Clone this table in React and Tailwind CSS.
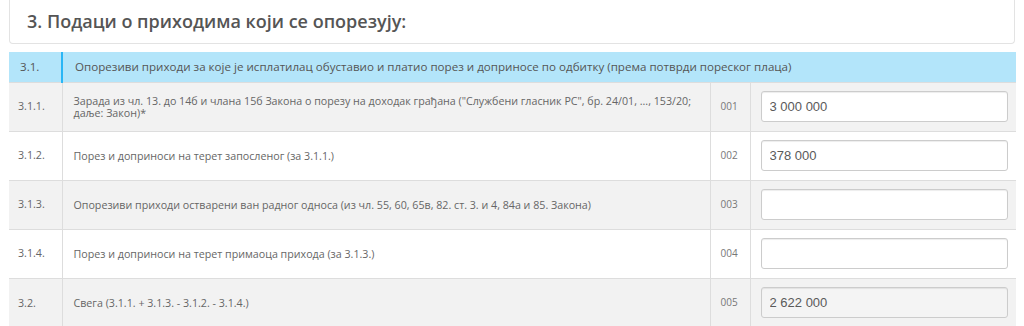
import React from "react";

const rows = [
  {
    no: "3.1.1.",
    label: (
      <>
        <span className="whitespace-nowrap">
          Зарада из чл. 13. до 14б и члана 15б Закона о порезу на доходак грађана ("Службени гласник РС", бр. 24/01, ..., 153/20;
        </span>
        <br />
        даље: Закон)*
      </>
    ),
    code: "001",
    value: "3 000 000",
  },
  { no: "3.1.2.", label: "Порез и доприноси на терет запосленог (за 3.1.1.)", code: "002", value: "378 000" },
  {
    no: "3.1.3.",
    label: "Опорезиви приходи остварени ван радног односа (из чл. 55, 60, 65в, 82. ст. 3. и 4, 84а и 85. Закона)",
    code: "003",
    value: "",
  },
  { no: "3.1.4.", label: "Порез и доприноси на терет примаоца прихода (за 3.1.3.)", code: "004", value: "" },
  { no: "3.2.", label: "Свега (3.1.1. + 3.1.3. - 3.1.2. - 3.1.4.)", code: "005", value: "2 622 000", readOnly: true },
];

const IncomeRow = ({ row, striped }) => (
  <tr className={`h-[49px] border-t border-[#dddddd] ${striped ? "bg-[#f2f2f2]" : "bg-white"}`}>
    <td className="pl-[9px] align-middle text-[10.7px] text-[#666]">{row.no}</td>
    <td className="border-l border-[#dddddd] pl-[11px] pr-2 align-middle text-[10.7px] leading-[12px] text-[#666]">
      {row.label}
    </td>
    <td className="border-l border-[#dddddd] pl-[10px] align-middle text-[10px] text-[#777]">{row.code}</td>
    <td className="border-l border-[#dddddd] pl-[10px] pr-[8px] align-middle">
      <input
        type="text"
        readOnly
        value={row.value}
        className={`h-[31px] w-full rounded-[3px] border border-[#cccccc] px-[8px] font-['Liberation_Sans',Arial,sans-serif] text-[13px] text-[#5a5a5a] shadow-[inset_0_1px_1px_rgba(0,0,0,0.075)] outline-none ${
          row.readOnly ? "bg-[#f4f4f4]" : "bg-white"
        }`}
      />
    </td>
  </tr>
);

export default function App() {
  return (
    <div className="h-[326px] w-[1024px] overflow-hidden bg-white px-[9px] font-['Open_Sans',sans-serif]">
      <div className="flex h-[44px] items-center rounded-b-[4px] border border-t-0 border-[#e3e3e3] pl-[17px]">
        <h3 className="text-[18px] font-semibold text-[#555]">3. Подаци о приходима који се опорезују:</h3>
      </div>

      <table className="mt-[8px] w-[1007px] table-fixed border-collapse">
        <colgroup>
          <col className="w-[53px]" />
          <col className="w-[648px]" />
          <col className="w-[40px]" />
          <col />
        </colgroup>
        <tbody>
          <tr className="h-[30px] bg-[#b3e5fa]">
            <td className="pl-[11px] align-middle text-[11.6px] text-[#555]">3.1.</td>
            <td colSpan={3} className="border-l-2 border-[#29b6f6] pl-[12px] align-middle text-[11.6px] text-[#555]">
              Опорезиви приходи за које је исплатилац обуставио и платио порез и доприносе по одбитку (према потврди пореског плаца)
            </td>
          </tr>
          {rows.map((row, i) => (
            <IncomeRow key={row.code} row={row} striped={i % 2 === 0} />
          ))}
        </tbody>
      </table>
    </div>
  );
}
